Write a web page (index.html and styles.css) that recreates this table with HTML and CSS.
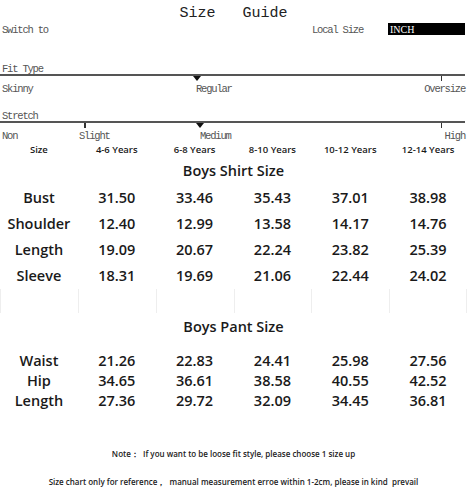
FILE: index.html
```html
<!DOCTYPE html>
<html>
<head>
<meta charset="utf-8">
<link rel="stylesheet" href="styles.css">
</head>
<body>
<div class="page">
  <div class="title">Size   Guide</div>
  <div class="switch">
    <span class="lbl">Switch to</span>
    <span class="local"><span class="lbl">Local Size</span><span class="unit">INCH</span></span>
  </div>

  <div class="scale fit">
    <div class="lbl cap">Fit Type</div>
    <div class="line"></div>
    <div class="marks"><span class="tri tri-fit"></span><span class="tick tick-end"></span></div>
    <div class="labels labels-fit"><span class="lbl">Skinny</span><span class="lbl">Regular</span><span class="lbl">Oversize</span></div>
  </div>

  <div class="scale stretch">
    <div class="lbl cap">Stretch</div>
    <div class="line"></div>
    <div class="marks"><span class="tick tick-slight"></span><span class="tri tri-str"></span><span class="tick tick-end"></span></div>
    <div class="labels labels-str"><span class="lbl">Non</span><span class="lbl">Slight</span><span class="lbl">Medium</span><span class="lbl">High</span></div>
  </div>

  <div class="grid head">
    <div>Size</div><div>4-6 Years</div><div>6-8 Years</div><div>8-10 Years</div><div>10-12 Years</div><div>12-14 Years</div>
  </div>

  <div class="section">Boys Shirt Size</div>
  <div class="grid row shirt"><div>Bust</div><div>31.50</div><div>33.46</div><div>35.43</div><div>37.01</div><div>38.98</div></div>
  <div class="grid row shirt"><div>Shoulder</div><div>12.40</div><div>12.99</div><div>13.58</div><div>14.17</div><div>14.76</div></div>
  <div class="grid row shirt"><div>Length</div><div>19.09</div><div>20.67</div><div>22.24</div><div>23.82</div><div>25.39</div></div>
  <div class="grid row shirt"><div>Sleeve</div><div>18.31</div><div>19.69</div><div>21.06</div><div>22.44</div><div>24.02</div></div>
  <div class="grid empty"><div></div><div></div><div></div><div></div><div></div><div></div></div>

  <div class="section pant-title">Boys Pant Size</div>
  <div class="grid row pant"><div>Waist</div><div>21.26</div><div>22.83</div><div>24.41</div><div>25.98</div><div>27.56</div></div>
  <div class="grid row pant"><div>Hip</div><div>34.65</div><div>36.61</div><div>38.58</div><div>40.55</div><div>42.52</div></div>
  <div class="grid row pant"><div>Length</div><div>27.36</div><div>29.72</div><div>32.09</div><div>34.45</div><div>36.81</div></div>

  <div class="note note1">Note：  If you want to be loose fit style, please choose 1 size up</div>
  <div class="note note2">Size chart only for reference，  manual measurement erroe within 1-2cm, please in kind  prevail</div>
</div>
</body>
</html>
```
FILE: styles.css
```css
html, body {
  margin: 0;
  padding: 0;
  background: #fff;
}
.page {
  width: 467px;
  height: 488px;
  overflow: hidden;
}
.title {
  height: 22px;
  line-height: 28px;
  text-align: center;
  font-family: "Liberation Mono", monospace;
  font-size: 15px;
  color: #222;
  white-space: pre;
}
.lbl {
  font-family: "Liberation Mono", monospace;
  font-size: 10.5px;
  letter-spacing: -1.2px;
  color: #555;
  line-height: 12px;
  white-space: pre;
}
.switch {
  display: flex;
  justify-content: space-between;
  align-items: center;
  height: 13px;
  padding-top: 1px;
  padding-left: 2px;
  padding-right: 2px;
}
.local {
  display: flex;
  align-items: center;
  gap: 25px;
}
.unit {
  background: #000;
  color: #fff;
  width: 77px;
  height: 12px;
  line-height: 13px;
  font-family: "Liberation Serif", serif;
  font-size: 10px;
  padding-left: 2px;
  box-sizing: border-box;
  margin-top: -1px;
}
.scale {
  padding-left: 2px;
}
.fit {
  margin-top: 26px;
}
.stretch {
  margin-top: 14px;
}
.cap {
  height: 12px;
  position: relative;
  top: 1px;
}
.line {
  height: 2px;
  background: #555;
  margin-right: 2px;
  margin-left: -2px;
}
.marks {
  display: flex;
  height: 5px;
  margin-left: -2px;
}
.tri {
  width: 0;
  height: 0;
  border-left: 4px solid transparent;
  border-right: 4px solid transparent;
  border-top: 5px solid #111;
}
.tri-fit { margin-left: 193px; }
.tri-str { margin-left: 110px; }
.tick {
  width: 1.5px;
  height: 5px;
  background: #333;
}
.tick-slight { margin-left: 84px; }
.tick-end { margin-left: auto; margin-right: 25px; }
.labels {
  display: grid;
  height: 12px;
  margin-top: 2px;
  padding-right: 2px;
}
.labels-fit { grid-template-columns: 194px 1fr auto; }
.labels-str { grid-template-columns: 77px 121px 1fr auto; }

.grid {
  display: grid;
  grid-template-columns: repeat(6, 1fr);
  font-family: "Open Sans", sans-serif;
  font-weight: 600;
  color: #1a1a1a;
  text-align: center;
}
.head {
  margin-top: 1px;
  height: 14px;
  line-height: 14px;
  font-size: 9.5px;
}
.section {
  height: 28px;
  line-height: 28px;
  text-align: center;
  font-family: "Open Sans", sans-serif;
  font-weight: 600;
  font-size: 14.5px;
  color: #1a1a1a;
}
.row.shirt {
  height: 26px;
  line-height: 26px;
  font-size: 14.5px;
}
.empty {
  height: 24px;
}
.empty > div {
  border-left: 1px solid #eee;
}
.empty > div:last-child {
  border-right: 1px solid #eee;
}
.pant-title {
  margin-bottom: 10px;
}
.row.pant {
  height: 20px;
  line-height: 20px;
  font-size: 14.5px;
}
.note {
  text-align: center;
  font-family: "Open Sans", sans-serif;
  font-weight: 600;
  font-size: 8px;
  color: #222;
  height: 14px;
  line-height: 14px;
  white-space: pre;
}
.note1 { margin-top: 36px; }
.note2 { margin-top: 14px; }
```
